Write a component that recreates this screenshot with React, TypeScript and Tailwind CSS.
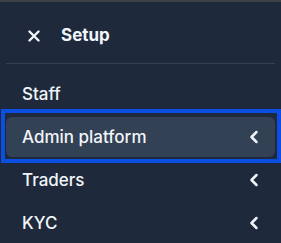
import { ChevronLeft } from "lucide-react";

const items = [
  { label: "Staff", chevron: false, active: false },
  { label: "Admin platform", chevron: true, active: true },
  { label: "Traders", chevron: true, active: false },
  { label: "KYC", chevron: true, active: false },
];

export default function App() {
  return (
    <div
      className="w-[281px] h-[243px] overflow-hidden bg-[#1e293b] border-t-2 border-[#3d4046] text-[#f1f5f9]"
      style={{ fontFamily: "Inter, 'Noto Sans', sans-serif" }}
    >
      {/* header */}
      <div className="h-[61px] pt-[6px] flex items-center pl-[28px] gap-[21px]">
        <svg width="12" height="12" viewBox="0 0 12 12" fill="none" stroke="currentColor" strokeWidth={2.4} strokeLinecap="round">
          <path d="M1.5 1.5l9 9M10.5 1.5l-9 9" />
        </svg>
        <span className="text-[17px] font-bold leading-none">Setup</span>
      </div>
      <div className="mx-[6px] border-t border-[#334155]" />

      <ul className="pt-[10px] flex flex-col gap-[3px]">
        {items.map((item) => (
          <li
            key={item.label}
            className={
              "relative mx-[6px] h-[40px] flex items-center justify-between pl-[16px] pr-[11px] rounded-md " +
              (item.active ? "bg-[#334155]" : "")
            }
          >
            {item.active && (
              <span className="absolute -left-[5px] -right-[6px] -top-[8px] -bottom-[6px] border-4 border-[#0a4fe2] pointer-events-none" />
            )}
            <span className="text-[17px] font-medium pt-[1px]">{item.label}</span>
            {item.chevron && <ChevronLeft size={20} strokeWidth={3} />}
          </li>
        ))}
      </ul>
    </div>
  );
}
